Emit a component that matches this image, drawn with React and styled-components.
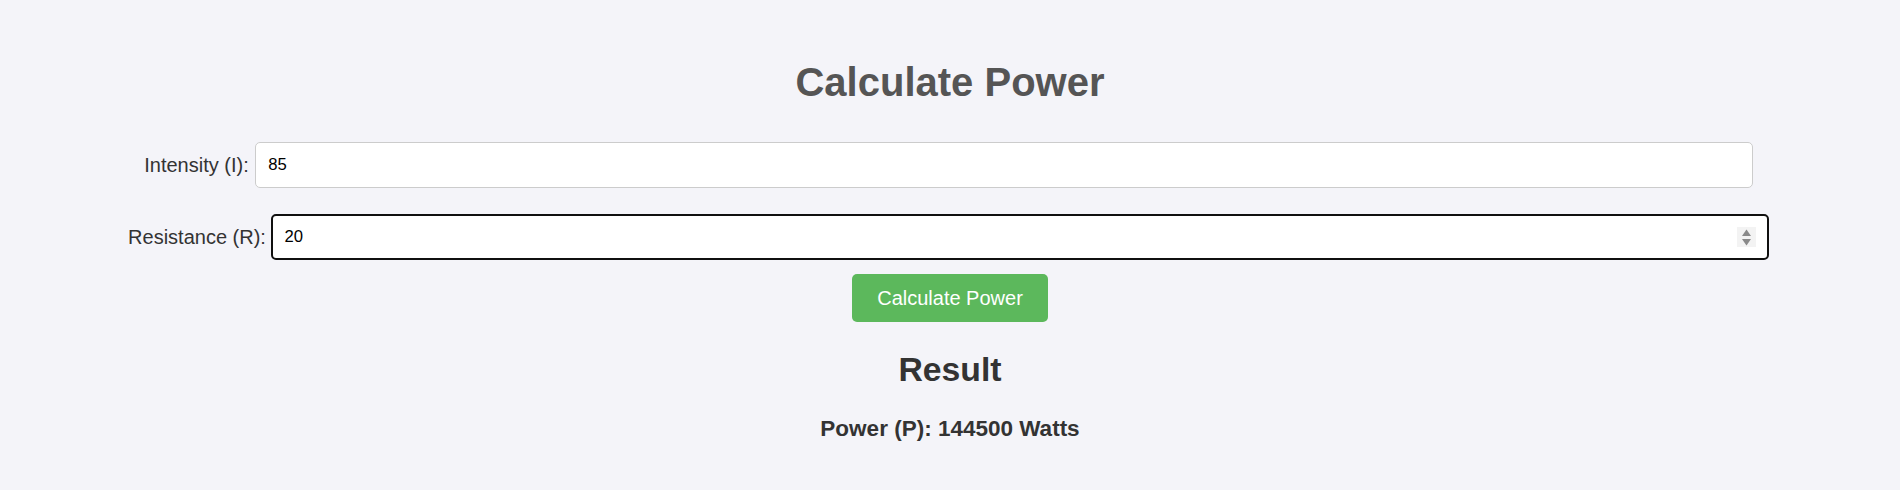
import React from 'react';
import styled, { createGlobalStyle } from 'styled-components';

const GlobalStyle = createGlobalStyle`
  body {
    margin: 0;
    background: #f4f4f9;
    font-family: "Liberation Sans", Arial, sans-serif;
  }
`;

const Page = styled.div`
  display: flex;
  flex-direction: column;
  align-items: center;
  padding-top: 59px;
  padding-bottom: 40px;
`;

const Title = styled.h1`
  margin: 0;
  font-size: 40px;
  line-height: 46px;
  font-weight: bold;
  color: #555;
`;

const Form = styled.form`
  display: flex;
  flex-direction: column;
  align-items: center;
  margin-top: 37px;
`;

const Row = styled.div`
  display: flex;
  align-items: center;
  justify-content: center;
  gap: ${(p) => p.$gap || 6}px;
  margin-right: 3px;
  margin-bottom: ${(p) => p.$last ? 14 : 26}px;
`;

const Label = styled.label`
  font-size: 20px;
  color: #333;
  white-space: nowrap;
`;

const Field = styled.div`
  position: relative;
  width: 1498px;
`;

const Input = styled.input`
  box-sizing: border-box;
  width: 100%;
  height: 46px;
  padding: 0 ${(p) => p.$focused ? 11.5 : 12.5}px;
  font-family: "Liberation Sans", Arial, sans-serif;
  font-size: 16.67px;
  color: #000;
  background: #fff;
  border: ${(p) => p.$focused ? '2px solid #101010' : '1px solid #ccc'};
  border-radius: 5px;
  outline: none;
  -moz-appearance: textfield;
  &::-webkit-inner-spin-button,
  &::-webkit-outer-spin-button {
    -webkit-appearance: none;
    margin: 0;
  }
`;

const Spinner = styled.div`
  position: absolute;
  top: 13px;
  right: 13px;
  width: 19px;
  height: 20px;
  background: #f3f3f3;
  display: flex;
  align-items: center;
  justify-content: center;
`;

const Button = styled.button`
  width: 196px;
  height: 48px;
  border: none;
  border-radius: 5px;
  background: #5cb85c;
  color: #fff;
  font-family: "Liberation Sans", Arial, sans-serif;
  font-size: 20px;
  cursor: pointer;
`;

const ResultTitle = styled.h2`
  margin: 28px 0 0;
  font-size: 33.75px;
  font-weight: bold;
  color: #333;
`;

const Output = styled.p`
  margin: 27px 0 0;
  font-size: 22.5px;
  font-weight: bold;
  color: #333;
`;

const SpinArrows = () => (
  <svg width="11" height="17" viewBox="0 0 11 17">
    <path d="M5.5 0.5 L10 7 L1 7 Z" fill="#8a8a8a" />
    <path d="M1 10 L10 10 L5.5 16.5 Z" fill="#8a8a8a" />
  </svg>
);

const App = () => {
  const intensity = 85;
  const resistance = 20;
  const power = intensity * intensity * resistance;

  return (
    <>
      <GlobalStyle />
      <Page>
        <Title>Calculate Power</Title>
        <Form onSubmit={(e) => e.preventDefault()}>
          <Row>
            <Label htmlFor="intensity">Intensity (I):</Label>
            <Field>
              <Input id="intensity" type="number" defaultValue={intensity} />
            </Field>
          </Row>
          <Row $gap={5} $last>
            <Label htmlFor="resistance">Resistance (R):</Label>
            <Field>
              <Input id="resistance" type="number" defaultValue={resistance} $focused />
              <Spinner>
                <SpinArrows />
              </Spinner>
            </Field>
          </Row>
          <Button type="submit">Calculate Power</Button>
        </Form>
        <ResultTitle>Result</ResultTitle>
        <Output>Power (P): {power} Watts</Output>
      </Page>
    </>
  );
};

export default App;
